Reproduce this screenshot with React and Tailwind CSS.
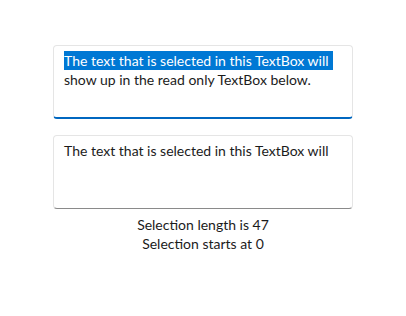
import React from 'react';

const font = { fontFamily: 'Lato, "Noto Sans", sans-serif' };

export default function App() {
  return (
    <div className="w-[406px] h-[316px] bg-white flex flex-col items-center pt-[45px] text-[14px] text-[#1b1b1b]" style={font}>
      {/* Editable TextBox, focused */}
      <div className="w-[300px] h-[74px] rounded-[4px] border border-[#e5e5e5] border-b-2 border-b-[#0067c0] px-[10px] pt-[5px] leading-[19px] whitespace-nowrap">
        <span className="bg-[#0078d4] text-white py-[1px] pr-[4px]">The text that is selected in this TextBox will</span>
        <br />
        show up in the read only TextBox below.
      </div>

      {/* Read only TextBox */}
      <div className="mt-[16px] w-[300px] h-[74px] rounded-[4px] border border-[#e5e5e5] border-b-[#8a8a8a] px-[10px] pt-[5px] leading-[19px] whitespace-nowrap">
        The text that is selected in this TextBox will
      </div>

      <div className="mt-[6px] flex flex-col items-center leading-[19px]">
        <span>Selection length is 47</span>
        <span>Selection starts at 0</span>
      </div>
    </div>
  );
}
